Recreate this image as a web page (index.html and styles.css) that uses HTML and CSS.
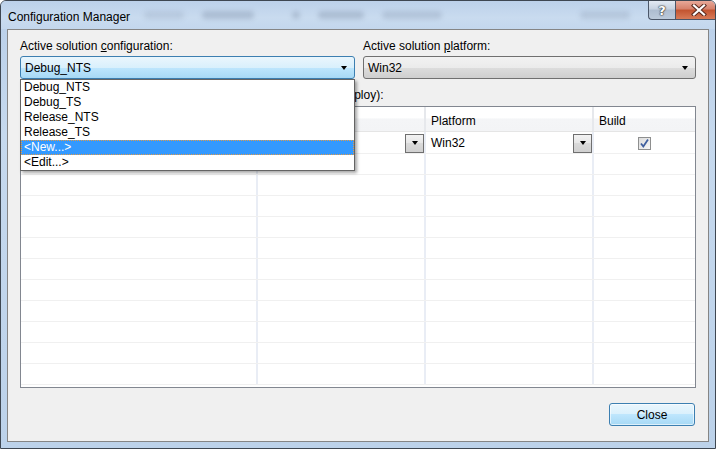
FILE: index.html
```html
<!DOCTYPE html>
<html lang="en">
<head>
    <meta charset="UTF-8">
    <title>Configuration Manager</title>
    <link rel="stylesheet" href="styles.css">
</head>
<body>
    <div class="window">
        <div class="titlebar">
            <span class="title">Configuration Manager</span>
            <div class="glass">
                <span class="smudge s1"></span>
                <span class="smudge s2"></span>
                <span class="smudge s3"></span>
                <span class="smudge s4"></span>
                <span class="smudge s5"></span>
                <span class="smudge s6"></span>
            </div>
            <div class="caption-buttons">
                <div class="cap help">?</div>
                <div class="cap close">
                    <svg width="16" height="12" viewBox="0 0 16 12">
                        <path d="M3 1.5 L13 10.5 M13 1.5 L3 10.5" stroke="#5a2a1e" stroke-width="4.2" stroke-linecap="square" fill="none"/>
                        <path d="M3 1.5 L13 10.5 M13 1.5 L3 10.5" stroke="#fff" stroke-width="2.2" stroke-linecap="square" fill="none"/>
                    </svg>
                </div>
            </div>
        </div>

        <div class="frame">
            <div class="client">
                <div class="combos">
                    <div class="field config">
                        <div class="label">Active solution <u>c</u>onfiguration:</div>
                        <div class="combo focused">
                            <span>Debug_NTS</span>
                            <span class="arrow"></span>
                        </div>
                        <ul class="popup">
                            <li>Debug_NTS</li>
                            <li>Debug_TS</li>
                            <li>Release_NTS</li>
                            <li>Release_TS</li>
                            <li class="selected">&lt;New...&gt;</li>
                            <li>&lt;Edit...&gt;</li>
                        </ul>
                    </div>
                    <div class="field platform">
                        <div class="label">Active solution <u>p</u>latform:</div>
                        <div class="combo">
                            <span>Win32</span>
                            <span class="arrow"></span>
                        </div>
                    </div>
                </div>

                <!-- the open dropdown hides the start of this label -->
                <div class="contexts-label"><span class="covered">Project contexts (check the project configurations to build or d</span>eploy):</div>

                <div class="grid">
                    <div class="row head">
                        <div class="cell"></div>
                        <div class="cell"></div>
                        <div class="cell">Platform</div>
                        <div class="cell">Build</div>
                    </div>
                    <div class="row first">
                        <div class="cell"></div>
                        <div class="cell"><span class="drop"><span class="arrow"></span></span></div>
                        <div class="cell">Win32<span class="drop"><span class="arrow"></span></span></div>
                        <div class="cell center"><span class="check">
                            <svg width="11" height="11" viewBox="0 0 11 11">
                                <path d="M2 5.5 L4.3 8.5 L9 1.5" stroke="#3f5f9e" stroke-width="1.8" fill="none"/>
                            </svg>
                        </span></div>
                    </div>
                    <div class="row"><div class="cell"></div><div class="cell"></div><div class="cell"></div><div class="cell"></div></div>
                    <div class="row"><div class="cell"></div><div class="cell"></div><div class="cell"></div><div class="cell"></div></div>
                    <div class="row"><div class="cell"></div><div class="cell"></div><div class="cell"></div><div class="cell"></div></div>
                    <div class="row"><div class="cell"></div><div class="cell"></div><div class="cell"></div><div class="cell"></div></div>
                    <div class="row"><div class="cell"></div><div class="cell"></div><div class="cell"></div><div class="cell"></div></div>
                    <div class="row"><div class="cell"></div><div class="cell"></div><div class="cell"></div><div class="cell"></div></div>
                    <div class="row"><div class="cell"></div><div class="cell"></div><div class="cell"></div><div class="cell"></div></div>
                    <div class="row"><div class="cell"></div><div class="cell"></div><div class="cell"></div><div class="cell"></div></div>
                    <div class="row"><div class="cell"></div><div class="cell"></div><div class="cell"></div><div class="cell"></div></div>
                    <div class="row"><div class="cell"></div><div class="cell"></div><div class="cell"></div><div class="cell"></div></div>
                    <div class="row"><div class="cell"></div><div class="cell"></div><div class="cell"></div><div class="cell"></div></div>
                </div>

                <div class="footer">
                    <button class="btn-close">Close</button>
                </div>
            </div>
        </div>
    </div>
</body>
</html>
```

FILE: styles.css
```css
body {
    margin: 0;
    padding: 0;
    width: 716px;
    height: 449px;
    overflow: hidden;
    background-color: #ffffff;
    font-family: "Liberation Sans", Arial, sans-serif;
    font-size: 12px;
    color: #000;
}

.window {
    width: 716px;
    height: 449px;
    box-sizing: border-box;
    border: 1px solid #3e4752;
    border-radius: 6px 6px 0 0;
    background: linear-gradient(to bottom, #b9cfe9, #c6d9ee 30%, #bcd2ea);
    display: flex;
    flex-direction: column;
    overflow: hidden;
}

/* title bar */
.titlebar {
    height: 28px;
    display: flex;
    align-items: flex-start;
    background: linear-gradient(to bottom, #bcd1ea, #c9dbef 60%, #c3d7ed);
}

.title {
    padding-left: 7px;
    line-height: 14px;
    margin-top: 9px;
    color: #000;
    white-space: nowrap;
}

.glass {
    flex: 1;
    display: flex;
    align-items: center;
    height: 28px;
    padding-left: 14px;
}

.smudge {
    height: 8px;
    border-radius: 4px;
    background-color: #8a9bb2;
    opacity: 0.45;
    filter: blur(2.5px);
    margin-right: 18px;
}

.s1 { width: 40px; opacity: 0.25; }
.s2 { width: 52px; }
.s3 { width: 8px; margin-left: 20px; }
.s4 { width: 46px; }
.s5 { width: 60px; opacity: 0.35; }
.s6 { width: 50px; margin-left: 120px; opacity: 0.3; }

.caption-buttons {
    display: flex;
    margin-right: 6px;
}

.cap {
    height: 18px;
    border: 1px solid #4b5668;
    border-top: none;
    display: flex;
    align-items: center;
    justify-content: center;
    box-sizing: content-box;
}

.help {
    width: 26px;
    border-radius: 0 0 0 4px;
    border-right: none;
    background: linear-gradient(to bottom, #e3eaf3, #c6d2e0 45%, #aebdd0 50%, #bccadb);
    color: #fff;
    font-family: "DejaVu Sans", sans-serif;
    font-weight: bold;
    font-size: 13px;
    text-shadow: 0 0 1px #333, 0 0 1px #333, 0 0 2px #333;
}

.close {
    width: 45px;
    border-radius: 0 0 4px 0;
    background: linear-gradient(to bottom, #e8a898, #d5806a 45%, #c2532f 50%, #d87b58);
}

/* client area */
.frame {
    flex: 1;
    display: flex;
    padding: 0 6px 6px 6px;
}

.client {
    flex: 1;
    border: 1px solid #858585;
    background-color: #f0f0f0;
    padding: 9px 12px 0 12px;
}

.combos {
    display: flex;
    gap: 8px;
}

.field {
    position: relative;
}

.config {
    width: 335px;
}

.platform {
    width: 333px;
}

.label {
    line-height: 15px;
    margin-bottom: 2px;
    white-space: nowrap;
}

.combo {
    height: 23px;
    box-sizing: border-box;
    border: 1px solid #707070;
    border-radius: 3px;
    background: linear-gradient(to bottom, #f2f2f2, #ebebeb 50%, #dddddd 50%, #cfcfcf);
    display: flex;
    align-items: center;
    justify-content: space-between;
    padding: 0 7px 0 4px;
}

.combo.focused {
    border-color: #3c7fb1;
    background: linear-gradient(to bottom, #eaf6fd, #d9f0fc 50%, #bee6fd 50%, #a7d9f5);
}

.arrow {
    width: 0;
    height: 0;
    border-left: 3.5px solid transparent;
    border-right: 3.5px solid transparent;
    border-top: 4px solid #000;
}

.popup {
    position: absolute;
    top: 40px;
    left: 0;
    width: 335px;
    box-sizing: border-box;
    margin: 0;
    padding: 0;
    list-style: none;
    background-color: #fff;
    border: 1px solid #646464;
    box-shadow: 2px 2px 3px rgba(0, 0, 0, 0.35);
    z-index: 10;
}

.popup li {
    height: 15px;
    line-height: 15px;
    padding-left: 3px;
}

.popup li.selected {
    background-color: #3399ff;
    color: #fff;
    outline: 1px dotted #e29b48;
    outline-offset: -1px;
}

.contexts-label {
    margin-top: 9px;
    margin-bottom: 3px;
    line-height: 15px;
    white-space: nowrap;
}

.covered {
    visibility: hidden;
}

/* grid */
.grid {
    height: 282px;
    box-sizing: border-box;
    border: 1px solid #828790;
    background-color: #fff;
    overflow: hidden;
}

.row {
    display: grid;
    grid-template-columns: 237px 168px 168px 1fr;
    height: 21px;
    box-sizing: border-box;
    border-bottom: 1px solid #f0f0f0;
}

.row.head {
    height: 25px;
    border-bottom: 1px solid #e5e5e5;
}

.row.first {
    height: 22px;
}

.cell {
    display: flex;
    align-items: center;
    padding-left: 5px;
    border-right: 2px solid #e9edf5;
    white-space: nowrap;
    overflow: hidden;
}

.cell:last-child {
    border-right: none;
}

.head .cell {
    padding-top: 3px;
    background: linear-gradient(to bottom, #ffffff, #ffffff 45%, #f4f5f7 50%, #f3f4f6);
    border-right: 2px solid #e6e8ec;
}

.head .cell:last-child {
    border-right: none;
}

.first .cell {
    padding-top: 1px;
}

.cell.center {
    justify-content: center;
    padding-left: 0;
}

.drop {
    margin-left: auto;
    width: 19px;
    height: 19px;
    box-sizing: border-box;
    border: 1px solid #6f6f6f;
    background: linear-gradient(to bottom, #f3f3f3, #e6e6e6 50%, #dadada 50%, #d0d0d0);
    display: flex;
    align-items: center;
    justify-content: center;
}

.check {
    width: 13px;
    height: 13px;
    box-sizing: border-box;
    border: 1px solid #8e8f8f;
    background: linear-gradient(to bottom right, #dcdcdc, #f6f6f6);
    display: flex;
    align-items: center;
    justify-content: center;
}

.footer {
    display: flex;
    justify-content: flex-end;
    margin-top: 15px;
}

.btn-close {
    width: 86px;
    height: 23px;
    margin-right: 1px;
    font-family: "Liberation Sans", Arial, sans-serif;
    font-size: 12px;
    color: #000;
    border: 1px solid #3c7fb1;
    border-radius: 3px;
    background: linear-gradient(to bottom, #eaf6fd, #d9f0fc 50%, #bee6fd 50%, #a7d9f5);
    box-shadow: inset 0 0 0 1px rgba(255, 255, 255, 0.6);
    padding: 0;
}
```
